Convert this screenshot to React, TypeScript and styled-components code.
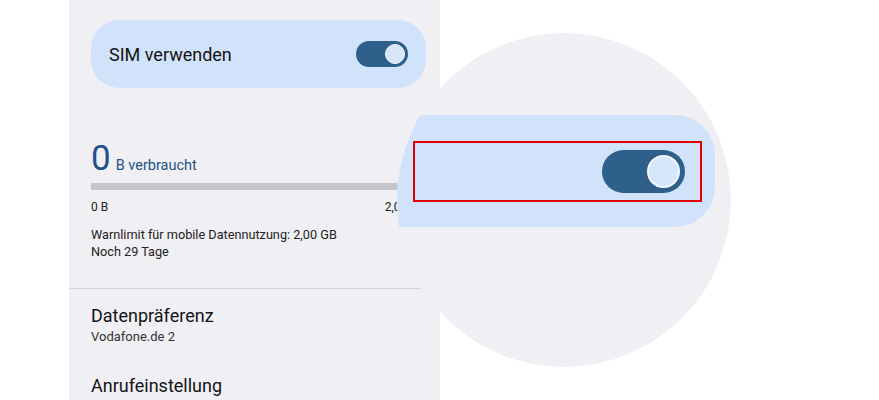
import React from "react";
import styled, { createGlobalStyle } from "styled-components";

const GlobalStyle = createGlobalStyle`
  html, body {
    margin: 0;
    padding: 0;
    background: #ffffff;
    font-family: Roboto, "Noto Sans", Arial, sans-serif;
  }
`;

const Page = styled.div`
  position: relative;
  width: 879px;
  height: 400px;
  overflow: hidden;
  background: #ffffff;
  display: flex;
`;

const Phone = styled.div`
  margin-left: 69px;
  width: 371px;
  height: 400px;
  background: #f0eff4;
  display: flex;
  flex-direction: column;
`;

const SimCard = styled.div`
  margin: 20px 14px 0 22px;
  height: 68px;
  border-radius: 28px;
  background: #d1e3fb;
  display: flex;
  align-items: center;
  justify-content: space-between;
  padding: 0 18px;
  color: #141414;
  font-size: 18px;
`;

const Track = styled.div<{ $big?: boolean }>`
  width: ${(p) => (p.$big ? 83 : 52)}px;
  height: ${(p) => (p.$big ? 43 : 26)}px;
  border-radius: 999px;
  background: #2f5f8b;
  display: flex;
  align-items: center;
  justify-content: flex-end;
  padding-right: ${(p) => (p.$big ? 5 : 3)}px;
  box-sizing: border-box;
`;

const Knob = styled.div<{ $big?: boolean }>`
  width: ${(p) => (p.$big ? 33 : 20)}px;
  height: ${(p) => (p.$big ? 33 : 20)}px;
  border-radius: 50%;
  background: #d6e6fb;
  box-sizing: border-box;
  border: ${(p) => (p.$big ? 2 : 1)}px solid #f4f8fe;
`;

const Usage = styled.div`
  margin: 53px 14px 0 22px;
  display: flex;
  flex-direction: column;
`;

const Amount = styled.div`
  display: flex;
  align-items: baseline;
  gap: 5px;
  color: #1f5287;
`;

const BigNumber = styled.span`
  font-size: 35px;
  line-height: 36px;
`;

const Unit = styled.span`
  font-size: 14.5px;
`;

const Bar = styled.div`
  margin-top: 6px;
  height: 7px;
  background: #c5c4c9;
`;

const Scale = styled.div`
  display: flex;
  justify-content: space-between;
  margin-top: 10px;
  font-size: 12px;
  color: #222;
`;

const Note = styled.div`
  margin-top: 12px;
  font-size: 12.7px;
  line-height: 17px;
  color: #222;
`;

const Divider = styled.div`
  margin: 28px 19px 0 0;
  height: 1px;
  background: #d3d2d7;
`;

const Item = styled.div<{ $gap: number }>`
  margin: ${(p) => p.$gap}px 0 0 22px;
  display: flex;
  flex-direction: column;
`;

const ItemTitle = styled.div`
  font-size: 18px;
  color: #141414;
`;

const ItemSub = styled.div`
  margin-top: 3px;
  font-size: 13px;
  color: #333;
`;

const Magnifier = styled.div`
  position: absolute;
  left: 397px;
  top: 33px;
  width: 334px;
  height: 334px;
  border-radius: 50%;
  background: #f0eff4;
  overflow: hidden;
  display: flex;
  flex-direction: column;
`;

const ZoomBand = styled.div`
  margin: 82px 0 0 -40px;
  width: 358px;
  height: 112px;
  border-radius: 0 40px 40px 0;
  background: #d1e3fb;
  display: flex;
  align-items: center;
  padding-left: 56px;
  box-sizing: border-box;
`;

const Highlight = styled.div`
  width: 289px;
  height: 61px;
  box-sizing: border-box;
  border: 2px solid #e00000;
  display: flex;
  align-items: center;
  justify-content: flex-end;
  padding-right: 15px;
`;

export default function App() {
  return (
    <>
      <GlobalStyle />
      <Page>
        <Phone>
          <SimCard>
            <span>SIM verwenden</span>
            <Track>
              <Knob />
            </Track>
          </SimCard>
          <Usage>
            <Amount>
              <BigNumber>0</BigNumber>
              <Unit>B verbraucht</Unit>
            </Amount>
            <Bar />
            <Scale>
              <span>0 B</span>
              <span>2,00 GB</span>
            </Scale>
            <Note>
              Warnlimit für mobile Datennutzung: 2,00 GB
              <br />
              Noch 29 Tage
            </Note>
          </Usage>
          <Divider />
          <Item $gap={16}>
            <ItemTitle>Datenpräferenz</ItemTitle>
            <ItemSub>Vodafone.de 2</ItemSub>
          </Item>
          <Item $gap={31}>
            <ItemTitle>Anrufeinstellung</ItemTitle>
          </Item>
        </Phone>
        <Magnifier>
          <ZoomBand>
            <Highlight>
              <Track $big>
                <Knob $big />
              </Track>
            </Highlight>
          </ZoomBand>
        </Magnifier>
      </Page>
    </>
  );
}
